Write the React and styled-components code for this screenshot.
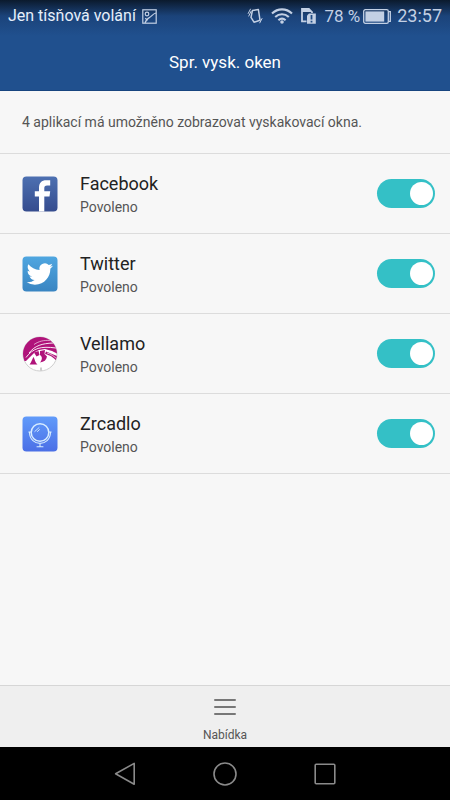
import { useState } from "react";
import styled, { createGlobalStyle } from "styled-components";

const GlobalStyle = createGlobalStyle`
    * {
        box-sizing: border-box;
    }

    body {
        margin: 0;
        background-color: #f7f7f7;
        color: #222;
        font-family: Roboto, "Noto Sans", sans-serif;
    }
`

const Screen = styled.div`
    display: flex;
    flex-direction: column;
    min-height: 100vh;
`

const Header = styled.header`
    background: linear-gradient(#0b1a2d 0, #1b437a 16px, #20508e 36px);
    color: white;
    border-bottom: 1px solid #17457f;
`

const StatusBar = styled.div`
    display: flex;
    align-items: center;
    justify-content: space-between;
    height: 32px;
    padding: 0 8px;
    line-height: 20px;
`

const StatusGroup = styled.div`
    display: flex;
    align-items: center;
    gap: ${props => props.$gap};
    color: ${props => props.$color};
    font-size: ${props => props.$size};
    white-space: nowrap;

    svg {
        display: block;
        flex: none;
    }
`

const Clock = styled.span`
    font-size: 18px;
`

const Title = styled.h1`
    margin: 0;
    padding: 19px 16px 17px;
    font-size: 17px;
    font-weight: 400;
    line-height: 22px;
    text-align: center;
`

const Main = styled.main`
    flex: 1;
`

const Notice = styled.p`
    margin: 0;
    padding: 21px 22px;
    font-size: 14px;
    line-height: 20px;
    color: #555;
`

const AppList = styled.ul`
    margin: 0;
    padding: 0;
    list-style: none;
    border-bottom: 1px solid #dcdcdc;
`

const AppRow = styled.li`
    display: flex;
    align-items: center;
    gap: 22px;
    height: 80px;
    padding: 0 15px 0 22px;
    border-top: 1px solid #dcdcdc;

    svg {
        display: block;
        flex: none;
    }
`

const AppLabel = styled.label`
    display: flex;
    flex-direction: column;
    flex: 1;
    padding-top: 2px;
`

const AppName = styled.span`
    font-size: 18px;
    line-height: 24px;
`

const AppState = styled.span`
    font-size: 14px;
    line-height: 22px;
    color: #555;
`

const Switch = styled.input`
    appearance: none;
    display: flex;
    align-items: center;
    justify-content: ${props => props.checked ? 'flex-end' : 'flex-start'};
    flex: none;
    width: 58px;
    height: 29px;
    margin: 0;
    padding: 0 2px;
    border-radius: 15px;
    background-color: ${props => props.checked ? '#34c0c6' : '#bdbdbd'};
    cursor: pointer;

    &::before {
        content: "";
        width: 23px;
        height: 23px;
        border-radius: 50%;
        background-color: white;
    }
`

const Toolbar = styled.footer`
    display: flex;
    justify-content: center;
    border-top: 1px solid #d6d6d6;
    background-color: #efefef;
`

const MenuButton = styled.button`
    display: flex;
    flex-direction: column;
    align-items: center;
    gap: 10px;
    padding: 11px 16px 4px;
    border: 0;
    background: none;
    color: #555;
    font-family: inherit;
    font-size: 12px;
    line-height: 16px;
`

const NavBar = styled.nav`
    display: flex;
    align-items: center;
    justify-content: center;
    gap: 52px;
    height: 53px;
    background-color: black;
`

const NavButton = styled.button`
    display: flex;
    align-items: center;
    justify-content: center;
    width: 48px;
    height: 48px;
    padding: 0;
    border: 0;
    background: none;
    color: #8a8a8a;
`

function PictureIcon() {
    return (
        <svg width="15" height="15" viewBox="0 0 15 15" fill="none" stroke="#c3d0e4" strokeWidth="1.2">
            <rect x="0.8" y="0.8" width="13.4" height="13.4" />
            <circle cx="5" cy="5" r="1.8" />
            <path d="M3 14C4 9.5 8 8.5 9.3 7.2C10.5 6 11.5 4.5 14 4M3.2 9.2L5.8 11.3" />
        </svg>
    );
}

function VibrateIcon() {
    return (
        <svg width="16" height="16" viewBox="0 0 16 16" fill="none" stroke="currentColor">
            <path d="M5.4 2.6L11.4 1.6L13 12.2L7 14.2L4 9.4Z" strokeWidth="1.5" strokeLinejoin="round" />
            <path d="M3.6 0.8L1 5.8M4.2 3L1.6 8.4M12.6 15.2L15.2 10.2" strokeWidth="1" />
        </svg>
    );
}

function WifiIcon() {
    return (
        <svg width="22" height="16" viewBox="0 0 22 16" fill="none" stroke="currentColor" strokeWidth="2.1">
            <path d="M1 5.6C6.8 0 15.2 0 21 5.6M4.2 9C8.2 5.3 13.8 5.3 17.8 9M7.4 12.2C9.6 10.2 12.4 10.2 14.6 12.2" />
            <circle cx="11" cy="14" r="1.8" fill="currentColor" stroke="none" />
        </svg>
    );
}

function SimIcon() {
    return (
        <svg width="15" height="16" viewBox="0 0 15 16">
            <path d="M5.5 13.4H1V1H7.8L11 4.2V5" fill="none" stroke="currentColor" strokeWidth="1.8" />
            <path d="M1 0.6H8L11 4H1Z" fill="currentColor" />
            <path d="M6 7.4L8 5.4H14.8V15.8H6Z" fill="currentColor" />
            <path d="M10.5 7V11.6M10.5 12.8V14.6" stroke="#1e4b85" strokeWidth="1.8" />
        </svg>
    );
}

function BatteryIcon() {
    return (
        <svg width="28" height="15" viewBox="0 0 28 15">
            <rect x="0.7" y="0.7" width="24.6" height="13.6" rx="1.6" fill="none" stroke="currentColor" strokeWidth="1.3" />
            <rect x="2.4" y="2.4" width="18.8" height="10.2" fill="currentColor" />
            <path d="M25.6 2.6H27.3V12.4H25.6" fill="none" stroke="currentColor" strokeWidth="1.3" />
        </svg>
    );
}

function FacebookIcon() {
    return (
        <svg width="36" height="36" viewBox="0 0 36 36">
            <linearGradient id="facebook" x2="0" y2="1">
                <stop stopColor="#4d70b1" />
                <stop offset="1" stopColor="#354c8e" />
            </linearGradient>
            <rect x="0.5" y="0.5" width="35" height="35" rx="4" fill="url(#facebook)" />
            <path d="M17 35.5V20.5H12.8V15.2H17V11.6C17 6.8 19.6 4.2 24.2 4.2H28.2V9.5H25.1C23 9.5 22.3 10.3 22.3 12.2V15.2H28.2L27.5 20.5H22.3V35.5Z" fill="white" />
        </svg>
    );
}

function TwitterIcon() {
    return (
        <svg width="36" height="36" viewBox="0 0 36 36">
            <linearGradient id="twitter" x2="0" y2="1">
                <stop stopColor="#4fa6e0" />
                <stop offset="1" stopColor="#3985c2" />
            </linearGradient>
            <rect x="0.5" y="0.5" width="35" height="35" rx="4" fill="url(#twitter)" />
            <path
                transform="translate(4.6 4.8) scale(1.1)"
                fill="white"
                d="M23.953 4.57a10 10 0 01-2.825.775 4.958 4.958 0 002.163-2.723c-.951.555-2.005.959-3.127 1.184a4.92 4.92 0 00-8.384 4.482C7.69 8.095 4.067 6.13 1.64 3.162a4.822 4.822 0 00-.666 2.475c0 1.71.87 3.213 2.188 4.096a4.904 4.904 0 01-2.228-.616v.06a4.923 4.923 0 003.946 4.827 4.996 4.996 0 01-2.212.085 4.936 4.936 0 004.604 3.417 9.867 9.867 0 01-6.102 2.105c-.39 0-.779-.023-1.17-.067a13.995 13.995 0 007.557 2.209c9.053 0 13.998-7.496 13.998-13.985 0-.21 0-.42-.015-.63A9.935 9.935 0 0024 4.59z"
            />
        </svg>
    );
}

function VellamoIcon() {
    return (
        <svg width="36" height="36" viewBox="0 0 36 36">
            <clipPath id="vellamo">
                <circle cx="18" cy="18" r="17" />
            </clipPath>
            <circle cx="18" cy="18" r="17" fill="white" stroke="#cfcfcf" />
            <g clipPath="url(#vellamo)">
                <path d="M0 0H36V18L30 15L23 13L17 14L13 16L8 21L4 25H0Z" fill="#b0137a" />
                <path d="M7 17C13 9.5 20 7.5 31 7M4 21.5C11 12 19 10 34 12" fill="none" stroke="white" strokeWidth="0.9" />
                <path d="M12 8.5C17 5 22 4.2 28 4.4" fill="none" stroke="white" strokeWidth="0.6" />
                <path d="M7.5 28.5C9.5 26 10 23.5 11.4 21C13 23 12.6 26 15.5 28.5Z" fill="#b0137a" />
                <path d="M12 16.5L16.5 15L17.5 19L14.5 20.5Z" fill="#b0137a" />
                <path d="M18 15L23 14L22.5 18L25 20.5C24.5 24 22 26 18 26.5C20.5 23.5 20.5 20.5 18 19Z" fill="#b0137a" />
                <path d="M24 15.5L35 20L36 26C31 21.5 29 19.5 23 18Z" fill="#b0137a" />
                <path d="M25 17C29 18 32 20 36 24" fill="none" stroke="white" strokeWidth="0.7" />
            </g>
            <path d="M19 31.5V34.5" stroke="#999" />
        </svg>
    );
}

function MirrorIcon() {
    return (
        <svg width="36" height="36" viewBox="0 0 36 36">
            <linearGradient id="mirror" x2="0" y2="1">
                <stop stopColor="#619bfa" />
                <stop offset="1" stopColor="#4b6fe6" />
            </linearGradient>
            <rect x="0.5" y="0.5" width="35" height="35" rx="4" fill="url(#mirror)" />
            <g fill="none" stroke="#d8edff" strokeLinecap="round">
                <circle cx="18" cy="16.5" r="8.8" strokeWidth="1.5" />
                <path d="M6.8 16H9M27 16H29.2M7.5 16.5C8 31 28 31 28.5 16.5M18 27.5V30.5M15 30.8H21" strokeWidth="1.1" />
                <path d="M12.8 15.5L17 11.6M15.5 15.5L17.5 13.6" strokeWidth="0.9" />
            </g>
        </svg>
    );
}

const apps = [
    { id: "app-facebook", name: "Facebook", Icon: FacebookIcon },
    { id: "app-twitter", name: "Twitter", Icon: TwitterIcon },
    { id: "app-vellamo", name: "Vellamo", Icon: VellamoIcon },
    { id: "app-zrcadlo", name: "Zrcadlo", Icon: MirrorIcon },
];

function AppItem({ id, name, Icon }) {
    const [allowed, setAllowed] = useState(true);

    return (
        <AppRow>
            <Icon />
            <AppLabel htmlFor={id}>
                <AppName>{name}</AppName>
                <AppState>{allowed ? "Povoleno" : "Zakázáno"}</AppState>
            </AppLabel>
            <Switch id={id} type="checkbox" checked={allowed} onChange={() => setAllowed(!allowed)} />
        </AppRow>
    );
}

function App() {
    return (
        <Screen>
            <GlobalStyle />
            <Header>
                <StatusBar>
                    <StatusGroup $gap="6px" $size="16px" $color="#e6effa">
                        <span>Jen tísňová volání</span>
                        <PictureIcon />
                    </StatusGroup>
                    <StatusGroup $gap="6px" $size="17px" $color="#c3d0e4">
                        <StatusGroup $gap="8px">
                            <VibrateIcon />
                            <WifiIcon />
                            <SimIcon />
                            <StatusGroup $gap="3px">
                                <span>78 %</span>
                                <BatteryIcon />
                            </StatusGroup>
                        </StatusGroup>
                        <Clock>23:57</Clock>
                    </StatusGroup>
                </StatusBar>
                <Title>Spr. vysk. oken</Title>
            </Header>
            <Main>
                <Notice>4 aplikací má umožněno zobrazovat vyskakovací okna.</Notice>
                <AppList>
                    {apps.map(app => <AppItem key={app.id} {...app} />)}
                </AppList>
            </Main>
            <Toolbar>
                <MenuButton>
                    <svg width="22" height="20" viewBox="0 0 22 20" stroke="#777" strokeWidth="2" strokeLinecap="round">
                        <path d="M1 3H21M1 10H21M1 17H21" />
                    </svg>
                    Nabídka
                </MenuButton>
            </Toolbar>
            <NavBar>
                <NavButton aria-label="Zpět">
                    <svg width="24" height="24" viewBox="0 0 24 24" fill="none" stroke="currentColor" strokeWidth="1.6" strokeLinejoin="round">
                        <path d="M21.2 1.4V22.2L2.6 11.8Z" />
                    </svg>
                </NavButton>
                <NavButton aria-label="Domů">
                    <svg width="24" height="24" viewBox="0 0 24 24" fill="none" stroke="currentColor" strokeWidth="1.6">
                        <circle cx="12" cy="12" r="11" />
                    </svg>
                </NavButton>
                <NavButton aria-label="Poslední">
                    <svg width="24" height="24" viewBox="0 0 24 24" fill="none" stroke="currentColor" strokeWidth="1.6">
                        <rect x="2.2" y="2.2" width="19.6" height="19.6" rx="1" />
                    </svg>
                </NavButton>
            </NavBar>
        </Screen>
    );
}

export default App;
